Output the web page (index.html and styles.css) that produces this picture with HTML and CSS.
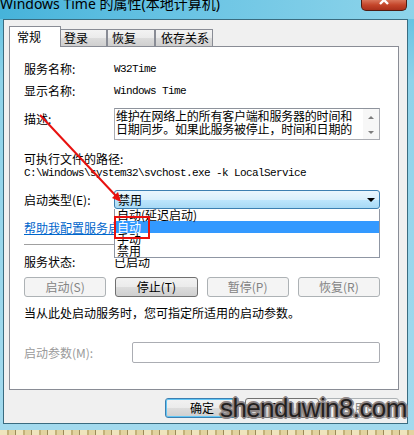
FILE: index.html
```html
<!DOCTYPE html>
<html lang="zh-CN">
<head>
    <meta charset="UTF-8">
    <title>Windows Time 的属性(本地计算机)</title>
    <link rel="stylesheet" href="styles.css">
</head>
<body>
    <div class="window">
        <div class="titlebar">
            <span class="title">Windows Time 的属性(本地计算机)</span>
            <span class="close">
                <svg width="46" height="10" viewBox="0 0 46 10">
                    <path d="M19 -4 L27 4 M27 -4 L19 4" stroke="#fff" stroke-width="2.4"/>
                </svg>
            </span>
        </div>

        <div class="client">
            <div class="tabs">
                <div class="tab active">常规</div>
                <div class="tab t1">登录</div>
                <div class="tab t2">恢复</div>
                <div class="tab t3">依存关系</div>
            </div>

            <div class="panel">
                <div class="row">
                    <span class="label">服务名称:</span>
                    <span class="mono">W32Time</span>
                </div>
                <div class="row r2">
                    <span class="label">显示名称:</span>
                    <span class="mono">Windows Time</span>
                </div>
                <div class="row desc-row">
                    <span class="label desc-label">描述:</span>
                    <div class="desc">
                        <div class="desc-text">维护在网络上的所有客户端和服务器的时间和日期同步。如果此服务被停止，时间和日期的</div>
                        <div class="scroll">
                            <span class="sa up"></span>
                            <span class="sa down"></span>
                        </div>
                    </div>
                </div>
                <div class="path-label">可执行文件的路径:</div>
                <div class="mono path">C:\Windows\system32\svchost.exe -k LocalService</div>
                <div class="row type-row">
                    <span class="label">启动类型(E):</span>
                    <div class="select">
                        <span>禁用</span>
                        <span class="caret"></span>
                        <ul class="dropdown">
                            <li>自动(延迟启动)</li>
                            <li class="sel">自动</li>
                            <li>手动</li>
                            <li>禁用</li>
                        </ul>
                    </div>
                </div>
                <a class="link" href="#">帮助我配置服务启动选项。</a>
                <div class="sep"></div>
                <div class="row status-row">
                    <span class="label">服务状态:</span>
                    <span>已启动</span>
                </div>
                <div class="buttons">
                    <div class="btn disabled">启动(S)</div>
                    <div class="btn">停止(T)</div>
                    <div class="btn disabled">暂停(P)</div>
                    <div class="btn disabled">恢复(R)</div>
                </div>
                <div class="note">当从此处启动服务时，您可指定所适用的启动参数。</div>
                <div class="row params">
                    <span class="label plabel">启动参数(M):</span>
                    <div class="input"></div>
                </div>
            </div>

            <div class="actions">
                <div class="btn act default">确定</div>
                <div class="btn act">取消</div>
                <div class="btn act disabled">应用(A)</div>
            </div>
        </div>
    </div>
    <div class="desktop"></div>

    <svg class="annot" width="414" height="435" viewBox="0 0 414 435">
        <line x1="40" y1="115" x2="116" y2="196" stroke="#e8110f" stroke-width="2"/>
        <polygon points="121,202 112,198 118,192" fill="#e8110f"/>
        <rect x="115" y="217" width="34" height="21" fill="none" stroke="#e8110f" stroke-width="2"/>
    </svg>
    <div class="watermark">shenduwin8.com</div>
</body>
</html>
```

FILE: styles.css
```css
* {
    box-sizing: border-box;
}

body {
    margin: 0;
    width: 414px;
    height: 435px;
    overflow: hidden;
    position: relative;
    font-family: "Noto Sans CJK SC", sans-serif;
    font-size: 12px;
    color: #000;
    background: #d9c995;
}

.window {
    height: 430px;
    background: linear-gradient(180deg, #5bbfe0 0, #8fd3ea 80px, #a3daee 100%);
    display: flex;
    flex-direction: column;
}

.titlebar {
    height: 19px;
    flex: none;
    display: flex;
    justify-content: space-between;
    align-items: flex-start;
    overflow: hidden;
    background: linear-gradient(90deg, #46b3da 0%, #6ac4e4 45%, #8ed4ea 100%);
}

.title {
    font-family: "Noto Sans", "Noto Sans CJK SC", sans-serif;
    font-size: 14px;
    line-height: 19px;
    margin-top: -6px;
    white-space: nowrap;
}

.close {
    width: 46px;
    height: 11px;
    margin-right: 7px;
    background: linear-gradient(#d9755a, #c4452a 50%, #a9301b);
    border: 1px solid #4e1c12;
    border-top: none;
    border-radius: 0 0 5px 5px;
    overflow: hidden;
    display: block;
}

.close svg {
    display: block;
    margin-left: -1px;
}

.client {
    margin-left: 3px;
    width: 405px;
    height: 405px;
    flex: none;
    background: #f0f0f0;
    border: 1px solid #3a6c80;
    padding: 6px 8px 5px 5px;
    display: flex;
    flex-direction: column;
}

/* tabs */
.tabs {
    display: flex;
    align-items: flex-end;
    height: 20px;
    flex: none;
    position: relative;
    z-index: 1;
}

.tab {
    height: 17px;
    border: 1px solid #898c95;
    border-bottom: none;
    background: linear-gradient(#f3f3f3, #ebebeb 50%, #dcdcdc 50%, #cfcfcf);
    line-height: 16px;
    padding-left: 3px;
    white-space: nowrap;
}

.tab.active {
    width: 52px;
    height: 21px;
    background: #fff;
    margin-bottom: -1px;
    padding-left: 7px;
    line-height: 20px;
}

.tab.t1 { width: 47px; margin-left: -1px; }
.tab.t2 { width: 48px; padding-left: 4px; }
.tab.t3 { width: 58px; padding-left: 5px; }

/* panel */
.panel {
    height: 344px;
    flex: none;
    background: #fff;
    border: 1px solid #898c95;
    padding: 14px 18px 0 14px;
    display: flex;
    flex-direction: column;
    align-items: flex-start;
}

.row {
    display: flex;
    align-items: center;
    line-height: 16px;
    width: 100%;
}

.label {
    width: 90px;
    flex: none;
}

.mono {
    font-family: "Liberation Mono", monospace;
    font-size: 11px;
    letter-spacing: -0.6px;
}

.r2 { margin-top: 6px; }

.desc-row {
    margin-top: 9px;
    align-items: flex-start;
}

.desc-label {
    padding-top: 3px;
}

.desc {
    width: 266px;
    height: 32px;
    border: 1px solid #abadb3;
    border-top-color: #8e939c;
    display: flex;
}

.desc-text {
    flex: 1;
    line-height: 13px;
    padding-left: 1px;
    overflow: hidden;
    letter-spacing: -0.2px;
}

.scroll {
    width: 16px;
    flex: none;
    background: #f7f7f7;
    display: flex;
    flex-direction: column;
    justify-content: space-between;
    align-items: center;
    padding: 7px 0 5px;
}

.sa {
    width: 0;
    height: 0;
    border-left: 3px solid transparent;
    border-right: 3px solid transparent;
}

.sa.up { border-bottom: 3px solid #7d7d7d; }
.sa.down { border-top: 3px solid #7d7d7d; }

.path-label {
    margin-top: 12px;
    line-height: 14px;
}

.path {
    line-height: 14px;
}

.type-row { margin-top: 10px; }

.select {
    width: 266px;
    height: 19px;
    border: 1px solid #3c7fb1;
    border-radius: 3px;
    background: linear-gradient(#eaf6fd, #d9f0fc 50%, #bee6fd 50%, #a7d9f5);
    padding-left: 3px;
    line-height: 17px;
    display: flex;
    justify-content: space-between;
    align-items: center;
    position: relative;
}

.caret {
    width: 0;
    height: 0;
    border-left: 4px solid transparent;
    border-right: 4px solid transparent;
    border-top: 4px solid #000;
    margin-right: 4px;
}

/* open list, lies over the rows below */
.dropdown {
    position: absolute;
    top: 18px;
    left: -1px;
    width: 266px;
    margin: 0;
    padding: 0;
    list-style: none;
    background: #fff;
    border: 1px solid #8f96a3;
    border-top: none;
    z-index: 5;
}

.dropdown li {
    height: 12px;
    line-height: 12px;
    padding-left: 2px;
    white-space: nowrap;
}

.dropdown li.sel {
    background: #3399ff;
    color: #fff;
}

.link {
    margin-top: 11px;
    line-height: 16px;
    color: #0066cc;
    text-decoration: underline;
}

.sep {
    margin-top: 8px;
    width: 100%;
    height: 1px;
    background: #a0a0a0;
}

.status-row { margin-top: 9px; }

.buttons {
    margin-top: 7px;
    width: 100%;
    display: grid;
    grid-template-columns: repeat(4, 1fr);
    gap: 9px;
}

.btn {
    height: 20px;
    border: 1px solid #707070;
    border-radius: 3px;
    background: linear-gradient(#f2f2f2, #ebebeb 50%, #dddddd 50%, #cfcfcf);
    text-align: center;
    line-height: 18px;
    white-space: nowrap;
}

.btn.disabled {
    border-color: #adb2b5;
    background: #f4f4f4;
    color: #838383;
}

.note {
    margin-top: 8px;
    line-height: 16px;
}

.params { margin-top: 21px; }

.plabel {
    width: 108px;
    color: #9a9a9a;
}

.input {
    width: 248px;
    height: 21px;
    border: 1px solid #abadb3;
    border-radius: 2px;
    background: #fff;
}

.actions {
    margin-top: 8px;
    display: flex;
    justify-content: flex-end;
    gap: 6px;
}

.btn.act {
    width: 74px;
}

.btn.default {
    border-color: #3c7fb1;
    box-shadow: inset 0 0 0 1px #62c6f5;
}

.desktop {
    height: 5px;
    background: repeating-linear-gradient(90deg, #efe4bd 0 7px, #c4b27a 7px 9px, #e2d3a0 9px 15px, #9c8a5a 15px 16px);
}

.annot {
    position: absolute;
    top: 0;
    left: 0;
    pointer-events: none;
    z-index: 10;
}

.watermark {
    position: absolute;
    left: 220px;
    top: 395px;
    font-family: "Liberation Sans", sans-serif;
    font-size: 26px;
    line-height: 26px;
    letter-spacing: -0.6px;
    color: #231f20;
    text-shadow: 2px 0 0 #8e8686, -2px 0 0 #8e8686, 0 2px 0 #8e8686, 0 -2px 0 #8e8686,
                 1px 1px 0 #8e8686, -1px -1px 0 #8e8686, 1px -1px 0 #8e8686, -1px 1px 0 #8e8686;
    z-index: 11;
}
```
